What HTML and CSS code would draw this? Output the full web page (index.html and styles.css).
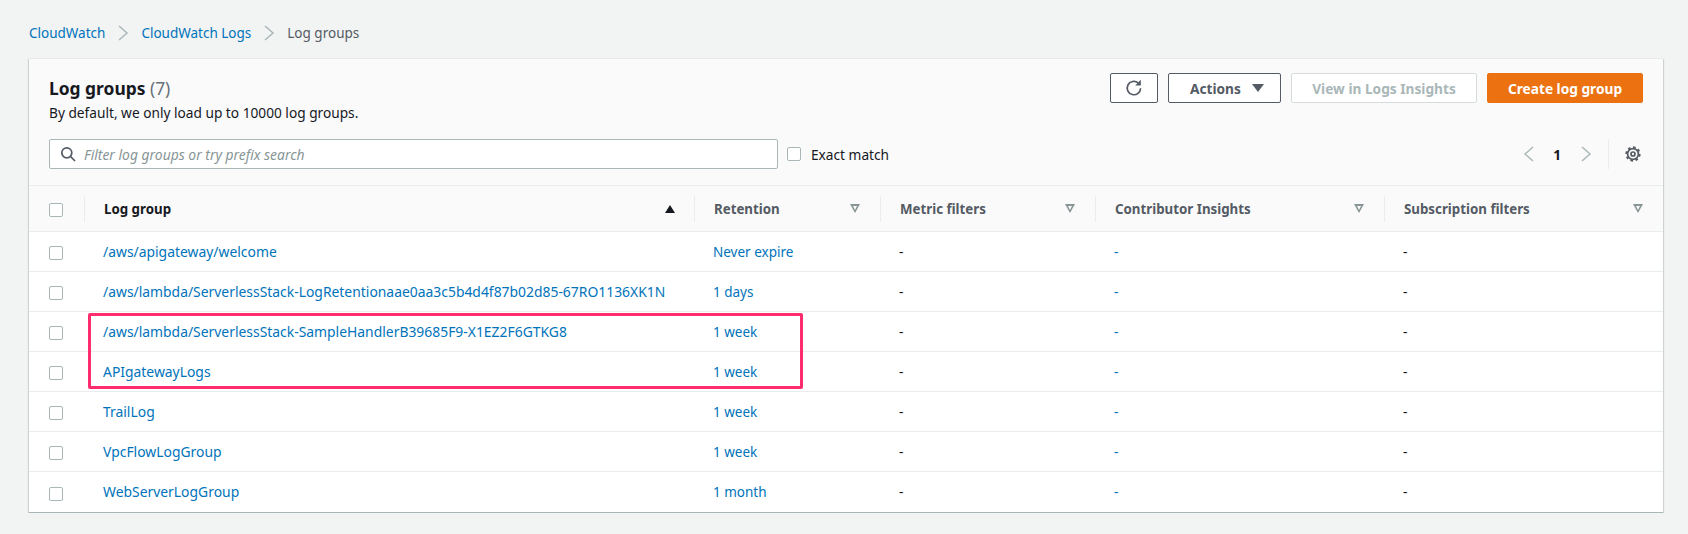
FILE: index.html
```html
<!DOCTYPE html>
<html lang="en">
<head>
    <meta charset="UTF-8">
    <title>Log groups</title>
    <link rel="stylesheet" href="styles.css">
</head>
<body>
    <nav class="breadcrumbs">
        <a href="#">CloudWatch</a>
        <svg class="crumb-sep" viewBox="0 0 12 16"><path d="M2 1l8 7-8 7"/></svg>
        <a href="#">CloudWatch Logs</a>
        <svg class="crumb-sep" viewBox="0 0 12 16"><path d="M2 1l8 7-8 7"/></svg>
        <span>Log groups</span>
    </nav>

    <section class="card">
        <div class="card-top">
            <div class="title-row">
                <div>
                    <h2>Log groups <span class="count">(7)</span></h2>
                    <p class="desc">By default, we only load up to 10000 log groups.</p>
                </div>
                <div class="actions">
                    <button class="btn btn-icon">
                        <svg class="icon refresh" viewBox="0 0 18 18">
                            <path d="M15.6 9.2a6.7 6.7 0 1 1-2.4-5.3"/>
                            <path class="arrow-head" d="M15.8 0.8v5.6h-5.6z"/>
                        </svg>
                    </button>
                    <button class="btn btn-actions">Actions <i class="caret"></i></button>
                    <button class="btn btn-disabled">View in Logs Insights</button>
                    <button class="btn btn-primary">Create log group</button>
                </div>
            </div>
            <div class="filter-row">
                <div class="search">
                    <svg class="icon" viewBox="0 0 16 16"><circle cx="6.8" cy="6.8" r="5"/><path d="M10.5 10.5l4.5 4.5"/></svg>
                    <span>Filter log groups or try prefix search</span>
                </div>
                <label class="exact"><i class="check"></i>Exact match</label>
                <div class="pager">
                    <svg class="pager-arrow" viewBox="0 0 12 16"><path d="M10 1L2 8l8 7"/></svg>
                    <b>1</b>
                    <svg class="pager-arrow" viewBox="0 0 12 16"><path d="M2 1l8 7-8 7"/></svg>
                    <span class="pager-sep"></span>
                    <svg class="icon gear" viewBox="0 0 16 16">
                        <circle cx="8" cy="8" r="2"/>
                        <circle cx="8" cy="8" r="5.4"/>
                        <circle class="gear-teeth" cx="8" cy="8" r="6.7" pathLength="16"/>
                    </svg>
                </div>
            </div>
        </div>

        <table>
            <colgroup>
                <col class="col-check"><col class="col-name"><col class="col-ret">
                <col class="col-metric"><col class="col-contrib"><col class="col-sub">
            </colgroup>
            <thead>
                <tr>
                    <th><i class="check"></i></th>
                    <th><div class="th-in sorted">Log group<i class="sort-on"></i></div></th>
                    <th><div class="th-in">Retention<i class="sort"></i></div></th>
                    <th><div class="th-in">Metric filters<i class="sort"></i></div></th>
                    <th><div class="th-in">Contributor Insights<i class="sort"></i></div></th>
                    <th><div class="th-in">Subscription filters<i class="sort"></i></div></th>
                </tr>
            </thead>
            <tbody>
                <tr><td><i class="check"></i></td><td class="name"><a href="#">/aws/apigateway/welcome</a></td><td class="ret"><a href="#">Never expire</a></td><td>-</td><td><a href="#">-</a></td><td>-</td></tr>
                <tr><td><i class="check"></i></td><td class="name"><a href="#">/aws/lambda/ServerlessStack-LogRetentionaae0aa3c5b4d4f87b02d85-67RO1136XK1N</a></td><td class="ret"><a href="#">1 days</a></td><td>-</td><td><a href="#">-</a></td><td>-</td></tr>
                <tr><td><i class="check"></i></td><td class="name"><a href="#">/aws/lambda/ServerlessStack-SampleHandlerB39685F9-X1EZ2F6GTKG8</a></td><td class="ret"><a href="#">1 week</a></td><td>-</td><td><a href="#">-</a></td><td>-</td></tr>
                <tr><td><i class="check"></i></td><td class="name"><a href="#">APIgatewayLogs</a></td><td class="ret"><a href="#">1 week</a></td><td>-</td><td><a href="#">-</a></td><td>-</td></tr>
                <tr><td><i class="check"></i></td><td class="name"><a href="#">TrailLog</a></td><td class="ret"><a href="#">1 week</a></td><td>-</td><td><a href="#">-</a></td><td>-</td></tr>
                <tr><td><i class="check"></i></td><td class="name"><a href="#">VpcFlowLogGroup</a></td><td class="ret"><a href="#">1 week</a></td><td>-</td><td><a href="#">-</a></td><td>-</td></tr>
                <tr><td><i class="check"></i></td><td class="name"><a href="#">WebServerLogGroup</a></td><td class="ret"><a href="#">1 month</a></td><td>-</td><td><a href="#">-</a></td><td>-</td></tr>
            </tbody>
        </table>
        <div class="highlight"></div>
    </section>
</body>
</html>
```

FILE: styles.css
```css
* {
    box-sizing: border-box;
}

body {
    margin: 0;
    padding: 0 25px 0 29px;
    background: #f2f3f3;
    color: #16191f;
    font-family: "Noto Sans", Arial, sans-serif;
    font-size: 13.7px;
}

a {
    color: #0073bb;
    text-decoration: none;
}

.breadcrumbs {
    display: flex;
    align-items: center;
    height: 59px;
    padding-top: 7px;
    color: #545b64;
    font-size: 13.5px;
}

.crumb-sep {
    width: 12px;
    height: 16px;
    margin: 0 12px;
    fill: none;
    stroke: #aab7b8;
    stroke-width: 1.5;
}

.card {
    position: relative;
    background: #fff;
    border-bottom: 1px solid #aab7b8;
    box-shadow: 0 1px 1px 0 rgba(0, 28, 36, 0.15), 1px 0 1px 0 rgba(0, 28, 36, 0.12), -1px 0 1px 0 rgba(0, 28, 36, 0.12);
}

.card-top {
    height: 126px;
    padding: 14px 20px 0 20px;
    background: #fafafa;
}

.title-row {
    display: flex;
    justify-content: space-between;
    height: 66px;
}

h2 {
    margin: 3px 0 0;
    font-size: 17.4px;
    line-height: 24px;
    font-weight: 700;
}

.count {
    color: #687078;
    font-weight: 400;
}

.desc {
    margin: 3px 0 0;
    line-height: 20px;
}

.actions {
    display: flex;
    gap: 10px;
    height: 30px;
}

.btn {
    height: 30px;
    padding: 0;
    border: 1px solid #545b64;
    border-radius: 2px;
    background: #fff;
    color: #545b64;
    font-family: inherit;
    font-size: 13.7px;
    font-weight: 700;
}

.btn-icon {
    width: 48px;
}

.btn-actions {
    display: flex;
    align-items: center;
    width: 113px;
    padding-left: 21px;
    gap: 11px;
}

.caret {
    width: 0;
    height: 0;
    border-left: 6px solid transparent;
    border-right: 6px solid transparent;
    border-top: 8px solid #545b64;
}

.btn-disabled {
    width: 186px;
    border-color: #d5dbdb;
    color: #aab7b8;
}

.btn-primary {
    width: 156px;
    border-color: #ec7211;
    background: #ec7211;
    color: #fff;
}

.icon {
    width: 16px;
    height: 16px;
    fill: none;
    stroke: #545b64;
    stroke-width: 1.7;
    vertical-align: middle;
}

.refresh {
    display: block;
    width: 18px;
    height: 18px;
    margin: 0 auto;
}

.arrow-head {
    fill: #545b64;
    stroke: none;
}

.filter-row {
    display: flex;
    align-items: center;
    height: 30px;
}

.search {
    display: flex;
    flex: none;
    align-items: center;
    gap: 8px;
    width: 729px;
    height: 30px;
    padding-left: 10px;
    border: 1px solid #aab7b8;
    border-radius: 2px;
    background: #fff;
    color: #879596;
    font-size: 13.9px;
    font-style: italic;
}

.check {
    display: inline-block;
    width: 14px;
    height: 14px;
    border: 1px solid #aab7b8;
    border-radius: 2px;
    background: #fff;
    vertical-align: middle;
}

.exact {
    display: flex;
    align-items: center;
    gap: 10px;
    margin-left: 9px;
}

.pager {
    display: flex;
    align-items: center;
    margin-left: auto;
}

.pager b {
    margin: 0 19px 0 18px;
    font-weight: 700;
}

.pager-arrow {
    width: 12px;
    height: 16px;
    fill: none;
    stroke: #aab7b8;
    stroke-width: 1.5;
}

.pager-sep {
    width: 1px;
    height: 30px;
    margin: 0 16px;
    background: #eaeded;
}

.gear {
    width: 16px;
    height: 16px;
    margin-right: 2px;
    stroke-width: 1.7;
}

.gear-teeth {
    stroke-width: 1.9;
    stroke-dasharray: 1 1;
}

table {
    width: 100%;
    border-collapse: collapse;
    table-layout: fixed;
}

.col-check { width: 55px; }
.col-name { width: 610px; }
.col-ret { width: 186px; }
.col-metric { width: 215px; }
.col-contrib { width: 289px; }

th {
    height: 46px;
    padding: 0;
    background: #fafafa;
    border-top: 1px solid #eaeded;
    border-bottom: 1px solid #eaeded;
    color: #545b64;
    font-size: 13.3px;
    font-weight: 700;
    text-align: left;
}

th:first-child,
td:first-child {
    padding-left: 20px;
}

.th-in {
    display: flex;
    align-items: center;
    justify-content: space-between;
    height: 26px;
    padding: 0 20px 0 19px;
    border-left: 1px solid #eaeded;
}

.sorted {
    color: #16191f;
    padding-right: 19px;
}

.sort {
    position: relative;
    width: 0;
    height: 0;
    border-left: 5.5px solid transparent;
    border-right: 5.5px solid transparent;
    border-top: 9px solid #879596;
}

.sort::after {
    content: "";
    position: absolute;
    left: -2.5px;
    top: -7px;
    border-left: 2.5px solid transparent;
    border-right: 2.5px solid transparent;
    border-top: 4px solid #fafafa;
}

.sort-on {
    width: 0;
    height: 0;
    border-left: 5.5px solid transparent;
    border-right: 5.5px solid transparent;
    border-bottom: 8px solid #16191f;
}

td {
    height: 40px;
    padding: 0 0 0 19px;
    border-bottom: 1px solid #eaeded;
    white-space: nowrap;
}

td.name {
    font-size: 13.9px;
}

td.ret {
    font-size: 13.5px;
}

tbody tr:last-child td {
    border-bottom: none;
}

.highlight {
    position: absolute;
    left: 59px;
    top: 254px;
    width: 715px;
    height: 76px;
    border: 3px solid #ff2d6e;
    border-radius: 2px;
}
```
